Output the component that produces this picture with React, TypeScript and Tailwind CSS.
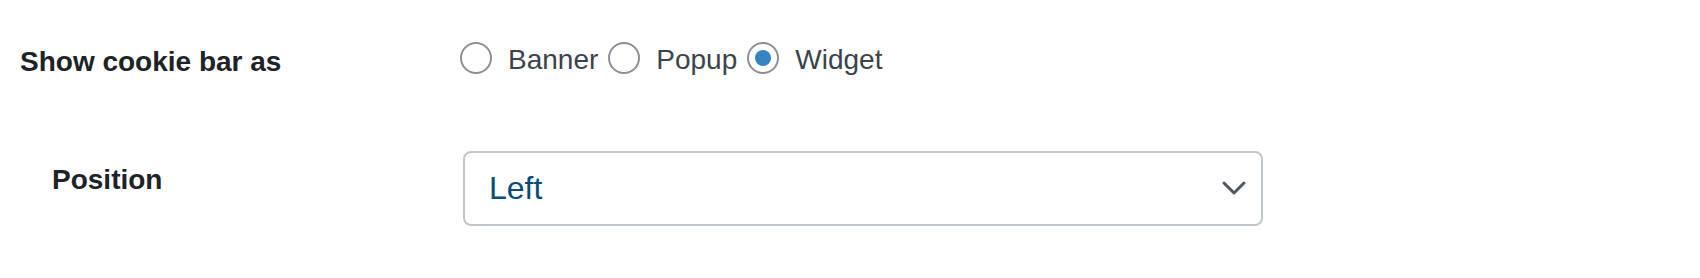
import React, { useState } from 'react'

const options = ['Banner', 'Popup', 'Widget']

const Radio = ({ checked }: { checked: boolean }) => (
  <span className="flex h-[32px] w-[32px] shrink-0 items-center justify-center rounded-full border-2 border-[#8c8f94] bg-white">
    {checked && <span className="h-[16px] w-[16px] rounded-full bg-[#3582c4]" />}
  </span>
)

const App = () => {
  const [mode, setMode] = useState('Widget')

  return (
    <div className="h-[278px] w-[1700px] bg-white font-['Liberation_Sans',Arial,sans-serif]">
      <div className="flex pt-[42px]">
        <div className="w-[460px] shrink-0 pl-[20px] pt-[4px] text-[28px] font-bold leading-[32px] text-[#1d2327]">
          Show cookie bar as
        </div>
        <div className="flex items-start">
          {options.map((opt, i) => (
            <label
              key={opt}
              className={`flex cursor-pointer items-start ${i > 0 ? 'ml-[10px]' : ''}`}
              onClick={() => setMode(opt)}
            >
              <Radio checked={mode === opt} />
              <span className="ml-[16px] mt-[2px] text-[28px] leading-[32px] text-[#3c434a]">{opt}</span>
            </label>
          ))}
        </div>
      </div>

      <div className="mt-[73px] flex">
        <div className="w-[463px] shrink-0 pl-[52px] pt-[13px] text-[28px] font-bold leading-[32px] text-[#1d2327]">
          Position
        </div>
        <div className="flex h-[75px] w-[800px] items-center justify-between rounded-[8px] border-2 border-[#c0c6cc] bg-white pl-[24px] pr-[15px]">
          <span className="text-[32px] leading-[37px] text-[#0a4b78]">Left</span>
          <svg width="24" height="15" viewBox="0 0 24 15" fill="none">
            <polyline
              points="2,2 12,12 22,2"
              stroke="#50575e"
              strokeWidth="3"
              strokeLinecap="round"
              strokeLinejoin="round"
            />
          </svg>
        </div>
      </div>
    </div>
  )
}

export default App
